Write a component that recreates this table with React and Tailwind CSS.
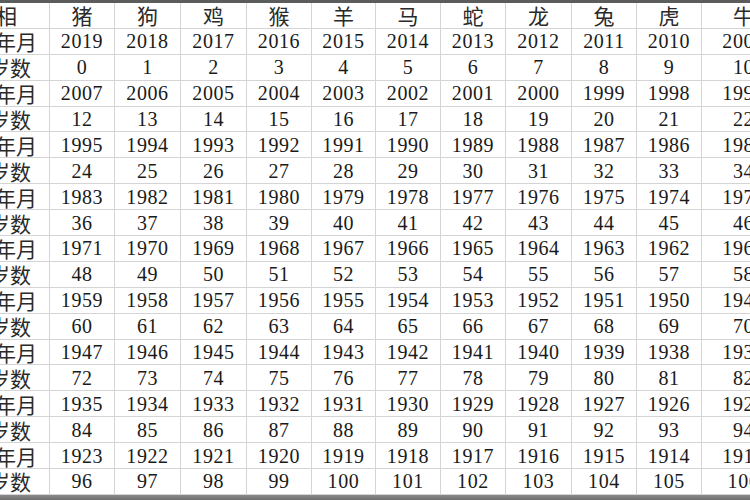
import React from 'react';

const animals = ['猪', '狗', '鸡', '猴', '羊', '马', '蛇', '龙', '兔', '虎', '牛'];
const widths = ['w-[65px]', 'w-[66px]', 'w-[66px]', 'w-[65px]', 'w-[64px]', 'w-[65px]', 'w-[65px]', 'w-[66px]', 'w-[65px]', 'w-[65px]', 'w-[84px]'];

const cjk = { fontFamily: '"Noto Sans CJK SC", sans-serif' };
const serif = { fontFamily: '"Liberation Serif", "Times New Roman", serif' };

function Label({ kind }) {
  // first column is cut off on the left in the screenshot
  if (kind === 'head') {
    return <span className="pr-[32px]">属相</span>;
  }
  if (kind === 'year') {
    return <span className="pr-[12px]">出生年月</span>;
  }
  return <span className="pr-[18px]">岁数</span>;
}

function Row({ kind, cells }) {
  return (
    <div className="flex h-[25.9px] shrink-0 border-b border-[#d4d4d4]">
      <div
        className="w-[50px] shrink-0 flex items-center justify-end overflow-hidden whitespace-nowrap leading-[22px] border-r border-[#d4d4d4] text-[21px] text-[#2a2a2a]"
        style={cjk}
      >
        <Label kind={kind} />
      </div>
      {cells.map((c, i) => (
        <div
          key={i}
          className={`${widths[i]} shrink-0 flex items-center justify-center whitespace-nowrap leading-[22px] border-r border-[#d4d4d4] ${
            kind === 'head' ? 'text-[21px] text-[#2a2a2a]' : 'text-[20px] tracking-[0.6px] text-[#1a1a1a]'
          }`}
          style={kind === 'head' ? cjk : serif}
        >
          {c}
        </div>
      ))}
    </div>
  );
}

export default function App() {
  const rows = [];
  for (let k = 0; k < 9; k++) {
    rows.push({ kind: 'year', cells: animals.map((_, i) => 2019 - i - 12 * k) });
    rows.push({ kind: 'age', cells: animals.map((_, i) => i + 12 * k) });
  }

  return (
    <div className="w-[750px] h-[500px] overflow-hidden bg-white flex flex-col">
      <div className="h-[3px] shrink-0 bg-[#5c5c5c]" />
      <Row kind="head" cells={animals} />
      {rows.map((r, idx) => (
        <Row key={idx} kind={r.kind} cells={r.cells} />
      ))}
      <div className="flex-1 bg-gradient-to-b from-[#8a8a8a] to-[#6e6e6e]" />
    </div>
  );
}
